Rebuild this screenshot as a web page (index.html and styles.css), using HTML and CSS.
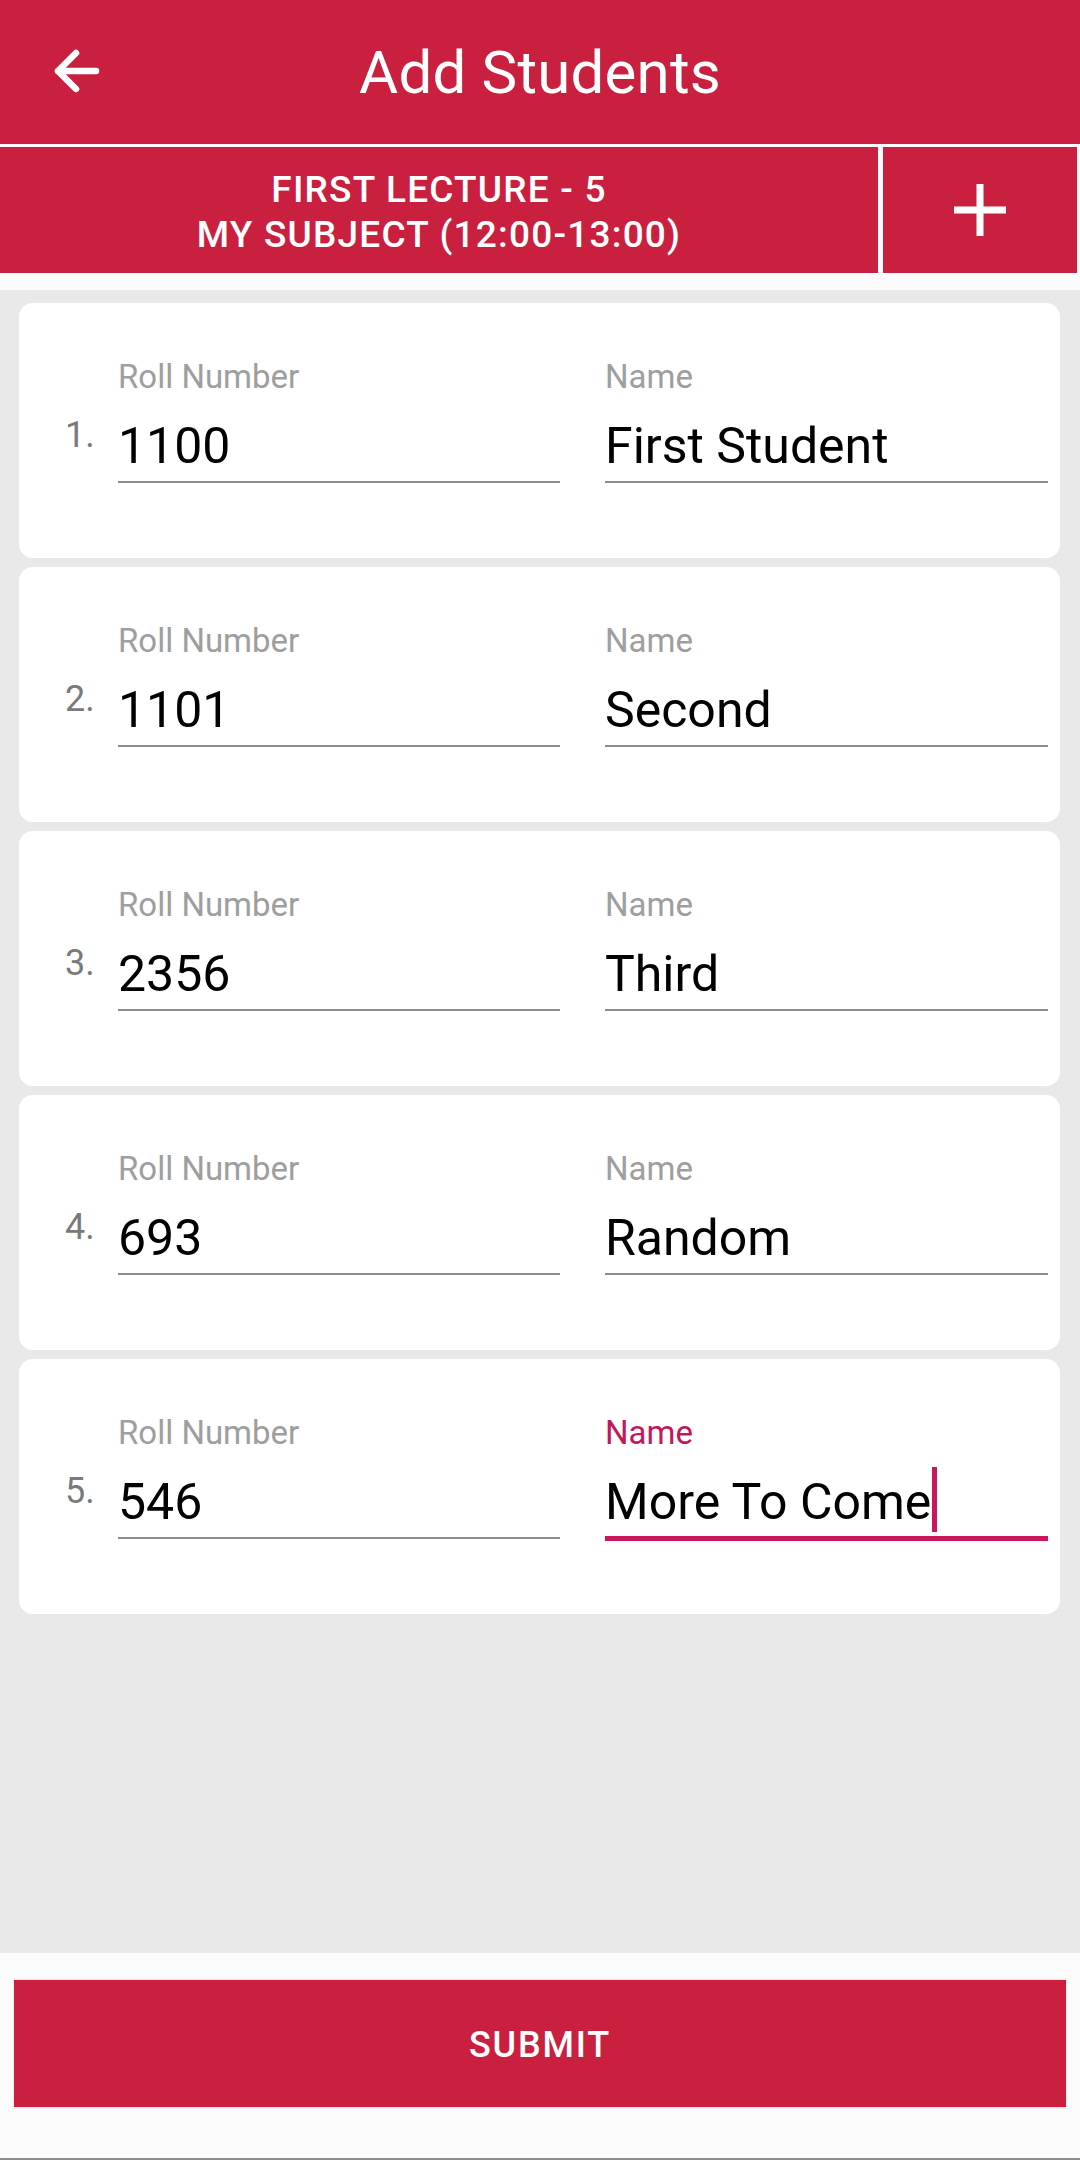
FILE: index.html
```html
<!DOCTYPE html>
<html lang="en">
	<head>
		<meta charset="UTF-8" />
		<meta name="viewport" content="width=device-width, initial-scale=1.0" />
		<title>Add Students</title>
		<link rel="stylesheet" href="styles.css">
	</head>
	<body>
		<div class="screen">
			<!-- 標題列 -->
			<header class="toolbar">
				<button class="toolbar__back" aria-label="Back">
					<svg width="46" height="44" viewBox="0 0 46 44">
						<path d="M42 22H4M22 4L4 22L22 40" fill="none" stroke="#fff" stroke-width="6.5" stroke-linecap="round" stroke-linejoin="round" />
					</svg>
				</button>
				<h1 class="toolbar__title">Add Students</h1>
			</header>

			<!-- 課程資訊 -->
			<div class="lecture-bar">
				<div class="lecture-bar__info">
					<span>FIRST LECTURE - 5</span>
					<span>MY SUBJECT (12:00-13:00)</span>
				</div>
				<button class="lecture-bar__add" aria-label="Add student">
					<svg width="52" height="52" viewBox="0 0 52 52">
						<path d="M26 0V52M0 26H52" stroke="#fff" stroke-width="7" />
					</svg>
				</button>
			</div>

			<!-- 學生列表 -->
			<main class="student-list">
				<div class="student-card">
					<span class="student-card__index">1.</span>
					<div class="field">
						<label class="field__label">Roll Number</label>
						<div class="field__value">1100</div>
					</div>
					<div class="field">
						<label class="field__label">Name</label>
						<div class="field__value">First Student</div>
					</div>
				</div>

				<div class="student-card">
					<span class="student-card__index">2.</span>
					<div class="field">
						<label class="field__label">Roll Number</label>
						<div class="field__value">1101</div>
					</div>
					<div class="field">
						<label class="field__label">Name</label>
						<div class="field__value">Second</div>
					</div>
				</div>

				<div class="student-card">
					<span class="student-card__index">3.</span>
					<div class="field">
						<label class="field__label">Roll Number</label>
						<div class="field__value">2356</div>
					</div>
					<div class="field">
						<label class="field__label">Name</label>
						<div class="field__value">Third</div>
					</div>
				</div>

				<div class="student-card">
					<span class="student-card__index">4.</span>
					<div class="field">
						<label class="field__label">Roll Number</label>
						<div class="field__value">693</div>
					</div>
					<div class="field">
						<label class="field__label">Name</label>
						<div class="field__value">Random</div>
					</div>
				</div>

				<div class="student-card">
					<span class="student-card__index">5.</span>
					<div class="field">
						<label class="field__label">Roll Number</label>
						<div class="field__value">546</div>
					</div>
					<div class="field field--focused">
						<label class="field__label">Name</label>
						<div class="field__value">More To Come<span class="caret"></span></div>
					</div>
				</div>
			</main>

			<!-- 送出 -->
			<footer class="footer">
				<button class="submit-button">SUBMIT</button>
			</footer>
		</div>
	</body>
</html>
```

FILE: styles.css
```css
* {
	box-sizing: border-box;
}

body {
	margin: 0;
	font-family: Roboto, "Noto Sans", Arial, sans-serif;
	background-color: #fbfbfb;
}

button {
	font-family: inherit;
	border: none;
	padding: 0;
	background: none;
	cursor: pointer;
}

.screen {
	width: 1080px;
	height: 2160px;
	display: flex;
	flex-direction: column;
}

/* 標題列 */
.toolbar {
	height: 144px;
	flex-shrink: 0;
	display: grid;
	grid-template-columns: 1fr auto 1fr;
	align-items: center;
	background-color: #c9203f;
	color: #fff;
}

.toolbar__back {
	justify-self: start;
	margin-left: 54px;
	margin-top: -2px;
	display: flex;
}

.toolbar__title {
	margin: 0;
	font-size: 60px;
	font-weight: 400;
	letter-spacing: 0.2px;
}

/* 課程資訊 */
.lecture-bar {
	flex-shrink: 0;
	display: flex;
	gap: 5px;
	padding: 3px 3px 17px 0;
	background-color: #fbfbfb;
}

.lecture-bar__info {
	flex: 1;
	height: 126px;
	display: flex;
	flex-direction: column;
	align-items: center;
	justify-content: center;
	padding-top: 4px;
	background-color: #c9203f;
	color: #fff;
	font-size: 37px;
	font-weight: 500;
	line-height: 45px;
	letter-spacing: 1.2px;
}

.lecture-bar__add {
	width: 194px;
	height: 126px;
	display: flex;
	align-items: center;
	justify-content: center;
	background-color: #c9203f;
}

/* 學生列表 */
.student-list {
	flex: 1;
	display: flex;
	flex-direction: column;
	gap: 9px;
	padding: 13px 20px 0 19px;
	background-color: #e9e9e9;
}

.student-card {
	display: flex;
	align-items: flex-start;
	padding: 55px 12px 75px 46px;
	background-color: #fff;
	border-radius: 14px;
}

.student-card__index {
	width: 53px;
	margin-top: 56px;
	font-size: 36px;
	line-height: 42px;
	color: #7a7a7a;
}

.field {
	width: 442px;
}

.field + .field {
	margin-left: 45px;
	width: 443px;
}

.field__label {
	display: block;
	margin-bottom: 21px;
	font-size: 33px;
	line-height: 38px;
	color: #9e9e9e;
}

.field__value {
	height: 66px;
	padding-bottom: 6px;
	border-bottom: 2px solid #8c8c8c;
	font-size: 50px;
	line-height: 58px;
	color: #000;
	white-space: nowrap;
}

.field--focused .field__label {
	color: #c2185b;
}

.field--focused .field__value {
	height: 68px;
	padding-bottom: 5px;
	border-bottom: 5px solid #c8175a;
	margin-bottom: -2px;
}

.caret {
	display: inline-block;
	width: 5px;
	height: 65px;
	margin: -10px 0 -2px 1px;
	vertical-align: -11px;
	background-color: #c8175a;
}

/* 送出 */
.footer {
	flex-shrink: 0;
	height: 207px;
	padding: 27px 14px 0;
	background-color: #fcfcfc;
	border-bottom: 2px solid #8e8e8e;
}

.submit-button {
	width: 100%;
	height: 127px;
	padding-top: 3px;
	background-color: #c9203f;
	color: #fff;
	font-size: 36px;
	font-weight: 500;
	letter-spacing: 1.8px;
	box-shadow: 0 -1px 1px rgba(0, 0, 0, 0.08), 0 1px 2px rgba(0, 0, 0, 0.15);
}
```
